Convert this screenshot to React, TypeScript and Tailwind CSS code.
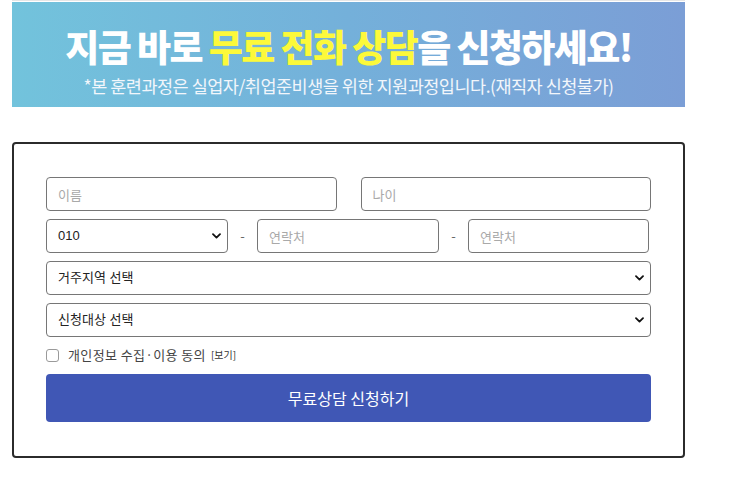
import { ChangeEvent, useState } from "react";

const font = { fontFamily: '"Noto Sans CJK KR", "Noto Sans", sans-serif' };

function Chevron() {
  return (
    <svg
      className="pointer-events-none absolute right-[7px] top-1/2 -translate-y-1/2"
      width="9"
      height="6"
      viewBox="0 0 9 6"
      fill="none"
    >
      <path d="M1 1.2l3.5 3.4L8 1.2" stroke="#111" strokeWidth="1.8" strokeLinecap="round" strokeLinejoin="round" />
    </svg>
  );
}

function Select({ value, options, className }: { value: string; options: string[]; className?: string }) {
  const [v, setV] = useState(value);
  return (
    <div className={"relative " + (className ?? "")}>
      <select
        value={v}
        onChange={(e: ChangeEvent<HTMLSelectElement>) => setV(e.target.value)}
        className="h-[34px] w-full appearance-none rounded-[4px] border border-[#767676] bg-white pl-[11px] text-[13px] text-[#222] outline-none"
        style={{ fontFamily: '"Liberation Sans", "Noto Sans CJK KR", sans-serif' }}
      >
        {options.map((o) => (
          <option key={o}>{o}</option>
        ))}
      </select>
      <Chevron />
    </div>
  );
}

function Field({ placeholder, className }: { placeholder: string; className?: string }) {
  return (
    <input
      type="text"
      placeholder={placeholder}
      className={
        "h-[34px] rounded-[4px] border border-[#767676] bg-white pl-[11px] text-[13px] text-[#222] outline-none placeholder:text-[#a9a9a9] " +
        (className ?? "")
      }
      style={font}
    />
  );
}

function Dash() {
  return <div className="flex w-[29px] items-center justify-center text-[13px] text-[#666]">-</div>;
}

export default function App() {
  return (
    <div className="min-h-screen w-full bg-white" style={font}>
      <div className="ml-[12px] w-[673px] pt-[2px]">
        <div className="h-px -mt-[2px] mb-px w-full bg-[#e6e6e6]" />
        <div className="flex h-[105px] flex-col items-center bg-gradient-to-r from-[#72c3dc] via-[#74b0da] to-[#7b9ed6] pt-[26px]">
          <h1 className="text-[37px] font-black leading-none tracking-[-1.6px] text-white">
            지금 바로 <span className="text-[#fcf93a]">무료 전화 상담</span>을 신청하세요!
          </h1>
          <p className="mt-[12px] text-[17.5px] leading-none tracking-[-0.5px] text-[#f2f6fb]">
            *본 훈련과정은 실업자/취업준비생을 위한 지원과정입니다.(재직자 신청불가)
          </p>
        </div>

        <form className="mt-[35px] flex flex-col rounded-[4px] border-2 border-[#2b2b2b] px-[32px] pt-[33px] pb-[34px]">
          <div className="flex gap-[24px]">
            <Field placeholder="이름" className="flex-1" />
            <Field placeholder="나이" className="flex-1" />
          </div>
          <div className="mt-[8px] flex">
            <Select value="010" options={["010", "011", "016", "017", "019"]} className="w-[182px]" />
            <Dash />
            <Field placeholder="연락처" className="w-[182px]" />
            <Dash />
            <Field placeholder="연락처" className="w-[181px]" />
          </div>
          <Select value="거주지역 선택" options={["거주지역 선택", "서울", "경기", "인천"]} className="mt-[8px]" />
          <Select value="신청대상 선택" options={["신청대상 선택", "실업자", "취업준비생"]} className="mt-[8px]" />
          <label className="mt-[10px] flex h-[16px] items-center text-[13px] leading-[16px] text-[#444]">
            <input
              type="checkbox"
              className="h-[13px] w-[13px] appearance-none rounded-[3px] border border-[#9a9a9a] bg-white checked:bg-[#4057b5]"
            />
            <span className="ml-[9px] tracking-[0.4px]">개인정보 수집·이용 동의</span>
            <span className="ml-[5px] text-[10px] text-[#333]">[보기]</span>
          </label>
          <button
            type="button"
            className="mt-[11px] h-[48px] w-full rounded-[4px] bg-[#4057b5] text-[16px] text-white"
          >
            무료상담 신청하기
          </button>
        </form>
      </div>
    </div>
  );
}
